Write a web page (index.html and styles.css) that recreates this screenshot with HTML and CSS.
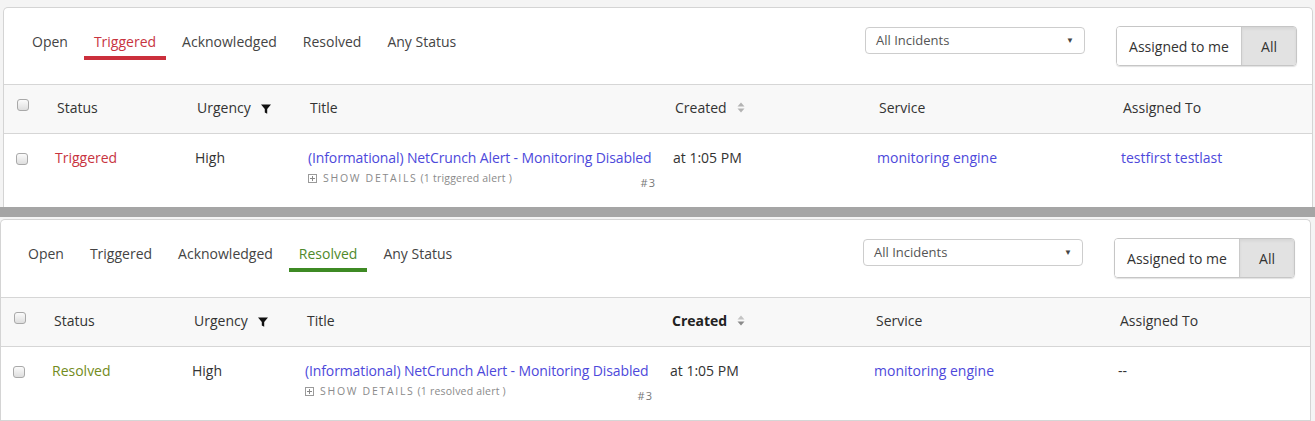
FILE: index.html
```html
<!DOCTYPE html>
<html lang="en">
<head>
<meta charset="utf-8">
<title>Incidents</title>
<link rel="stylesheet" href="styles.css">
</head>
<body>
<div class="page">
  <section class="shot shot-top">
    <div class="panel">
      <div class="toolbar">
        <nav class="tabs">
          <span class="tab">Open</span>
          <span class="tab tab-triggered">Triggered</span>
          <span class="tab">Acknowledged</span>
          <span class="tab">Resolved</span>
          <span class="tab">Any Status</span>
        </nav>
        <div class="select">All Incidents <span class="caret">&#9660;</span></div>
        <div class="toggle"><span class="tbtn">Assigned to me</span><span class="tbtn on">All</span></div>
      </div>
      <div class="grid head">
        <div class="cell"><span class="cb cb-head"></span></div>
        <div class="cell">Status</div>
        <div class="cell">Urgency <svg class="funnel" width="10" height="10" viewBox="0 0 10 10"><path d="M0 0.5h10L6.2 5v4.8L3.8 8.4V5z" fill="#111"/></svg></div>
        <div class="cell">Title</div>
        <div class="cell">Created <svg class="sort" width="8" height="11" viewBox="0 0 8 11"><path d="M4 0.5L7.5 4.5H0.5z M4 10.5L7.5 6.5H0.5z" fill="#b3b3b3"/></svg></div>
        <div class="cell">Service</div>
        <div class="cell">Assigned To</div>
      </div>
      <div class="grid row">
        <div class="cell"><span class="cb"></span></div>
        <div class="cell st-triggered">Triggered</div>
        <div class="cell">High</div>
        <div class="cell title-cell">
          <div class="title-line"><a class="link">(Informational) NetCrunch Alert - Monitoring Disabled</a></div>
          <div class="details">
            <svg class="plus" width="9" height="9" viewBox="0 0 9 9"><rect x="0.5" y="0.5" width="8" height="8" fill="#fff" stroke="#9a9a9a"/><path d="M2 4.5h5M4.5 2v5" stroke="#888" stroke-width="1"/></svg>
            <span class="show">SHOW DETAILS</span>
            <span class="count">(1 triggered alert )</span>
            <span class="num">#3</span>
          </div>
        </div>
        <div class="cell">at 1:05 PM</div>
        <div class="cell"><a class="link">monitoring engine</a></div>
        <div class="cell"><a class="link">testfirst testlast</a></div>
      </div>
    </div>
  </section>
  <div class="sep"></div>
  <section class="shot shot-bottom">
    <div class="panel">
      <div class="toolbar toolbar-tall">
        <nav class="tabs">
          <span class="tab">Open</span>
          <span class="tab">Triggered</span>
          <span class="tab">Acknowledged</span>
          <span class="tab tab-resolved">Resolved</span>
          <span class="tab">Any Status</span>
        </nav>
        <div class="select">All Incidents <span class="caret">&#9660;</span></div>
        <div class="toggle"><span class="tbtn">Assigned to me</span><span class="tbtn on">All</span></div>
      </div>
      <div class="grid head">
        <div class="cell"><span class="cb cb-head"></span></div>
        <div class="cell">Status</div>
        <div class="cell">Urgency <svg class="funnel" width="10" height="10" viewBox="0 0 10 10"><path d="M0 0.5h10L6.2 5v4.8L3.8 8.4V5z" fill="#111"/></svg></div>
        <div class="cell">Title</div>
        <div class="cell"><b class="sorted">Created</b> <svg class="sort" width="8" height="11" viewBox="0 0 8 11"><path d="M4 0.5L7.5 4.5H0.5z" fill="#c4c4c4"/><path d="M4 10.5L7.5 6.5H0.5z" fill="#8a8a8a"/></svg></div>
        <div class="cell">Service</div>
        <div class="cell">Assigned To</div>
      </div>
      <div class="grid row row-last">
        <div class="cell"><span class="cb"></span></div>
        <div class="cell st-resolved">Resolved</div>
        <div class="cell">High</div>
        <div class="cell title-cell">
          <div class="title-line"><a class="link">(Informational) NetCrunch Alert - Monitoring Disabled</a></div>
          <div class="details">
            <svg class="plus" width="9" height="9" viewBox="0 0 9 9"><rect x="0.5" y="0.5" width="8" height="8" fill="#fff" stroke="#9a9a9a"/><path d="M2 4.5h5M4.5 2v5" stroke="#888" stroke-width="1"/></svg>
            <span class="show">SHOW DETAILS</span>
            <span class="count">(1 resolved alert )</span>
            <span class="num">#3</span>
          </div>
        </div>
        <div class="cell">at 1:05 PM</div>
        <div class="cell"><a class="link">monitoring engine</a></div>
        <div class="cell">--</div>
      </div>
    </div>
  </section>
</div>
</body>
</html>
```

FILE: styles.css
```css
* { box-sizing: border-box; }
html, body { margin: 0; padding: 0; }
body {
  background: #f4f4f4;
  font-family: "Open Sans", "Liberation Sans", sans-serif;
  font-size: 14px;
  color: #333;
  width: 1315px;
  height: 421px;
  overflow: hidden;
}
.page { display: flex; flex-direction: column; }

.shot-top {
  margin: 7px 2px 0 3px;
  height: 200px;
  overflow: hidden;
}
.shot-bottom {
  margin: 2px 4px 0 0;
  height: 202px;
  overflow: hidden;
}
.sep { height: 10px; background: #a5a5a5; }

.panel {
  background: #fff;
  border: 1px solid #d4d4d4;
  border-bottom: none;
  border-radius: 5px 5px 0 0;
  height: 100%;
}

.toolbar {
  height: 76px;
  display: flex;
  align-items: flex-start;
  padding: 18px 15px 0 18px;
}
.toolbar-tall { height: 77px; padding-left: 17px; }

.tabs { display: flex; gap: 6px; margin-top: 6px; flex: 1; }
.tab {
  padding: 0 10px 4px;
  line-height: 20px;
  border-bottom: 4px solid transparent;
  color: #444;
  white-space: nowrap;
}
.tab-triggered { color: #c8343f; border-bottom-color: #cb2f3c; }
.tab-resolved { color: #4f8a2c; border-bottom-color: #3e8a24; }

.select {
  margin-top: 1px;
  width: 220px;
  height: 27px;
  border: 1px solid #cdcdcd;
  border-radius: 4px;
  padding: 0 10px;
  font-size: 13px;
  line-height: 24px;
  color: #555;
  display: flex;
  justify-content: space-between;
}
.caret { font-size: 8px; color: #444; }

.toggle {
  margin-left: 31px;
  display: flex;
  height: 40px;
  border: 1px solid #c6c6c6;
  border-radius: 4px;
  overflow: hidden;
  box-shadow: 0 1px 1px rgba(0,0,0,0.12);
}
.tbtn {
  display: flex;
  align-items: center;
  justify-content: center;
  width: 124px;
  background: #fff;
  color: #333;
}
.tbtn.on {
  width: 55px;
  background: #e2e2e2;
  border-left: 1px solid #cacaca;
  box-shadow: inset 0 2px 3px rgba(0,0,0,0.06);
}

.grid {
  display: grid;
  grid-template-columns: 51px 140px 113px 365px 204px 244px 1fr;
}
.head {
  height: 50px;
  background: #f8f8f8;
  border-top: 1px solid #d6d6d6;
  border-bottom: 1px solid #d6d6d6;
  align-items: center;
}
.head .cell { padding: 0 0 3px 2px; display: flex; align-items: center; white-space: nowrap; }
.cb {
  display: inline-block;
  width: 12px;
  height: 12px;
  border: 1px solid #a9a9a9;
  border-radius: 3px;
  background: linear-gradient(#fbfbfb, #dedede);
}
.head .cell:first-child { padding: 14px 0 0 13px; align-self: start; }
.funnel { margin-left: 10px; margin-top: 2px; }
.sort { margin-left: 10px; }
.sorted { font-weight: 700; color: #222; }

.row {
  height: 74px;
  padding-top: 14px;
  align-items: start;
  line-height: 20px;
}
.row-last { border-bottom: 1px solid #d6d6d6; }
.row .cell:first-child { padding-left: 12px; padding-top: 5px; line-height: 0; }

.st-triggered { color: #c8343f; }
.st-resolved { color: #728b21; }
.link { color: #4d49db; text-decoration: none; }

.title-cell { padding-right: 17px; }
.title-line { white-space: nowrap; letter-spacing: -0.12px; }
.details {
  display: flex;
  align-items: flex-start;
  margin-top: 2px;
  line-height: 16px;
  color: #8a8a8a;
  white-space: nowrap;
}
.plus { margin-top: 4px; margin-right: 6px; }
.show { font-size: 10.5px; letter-spacing: 1.7px; }
.count { font-size: 10.5px; margin-left: 3px; letter-spacing: 0.2px; }
.num { margin-left: auto; font-size: 11px; letter-spacing: 1px; padding-top: 5px; color: #777; }
```
